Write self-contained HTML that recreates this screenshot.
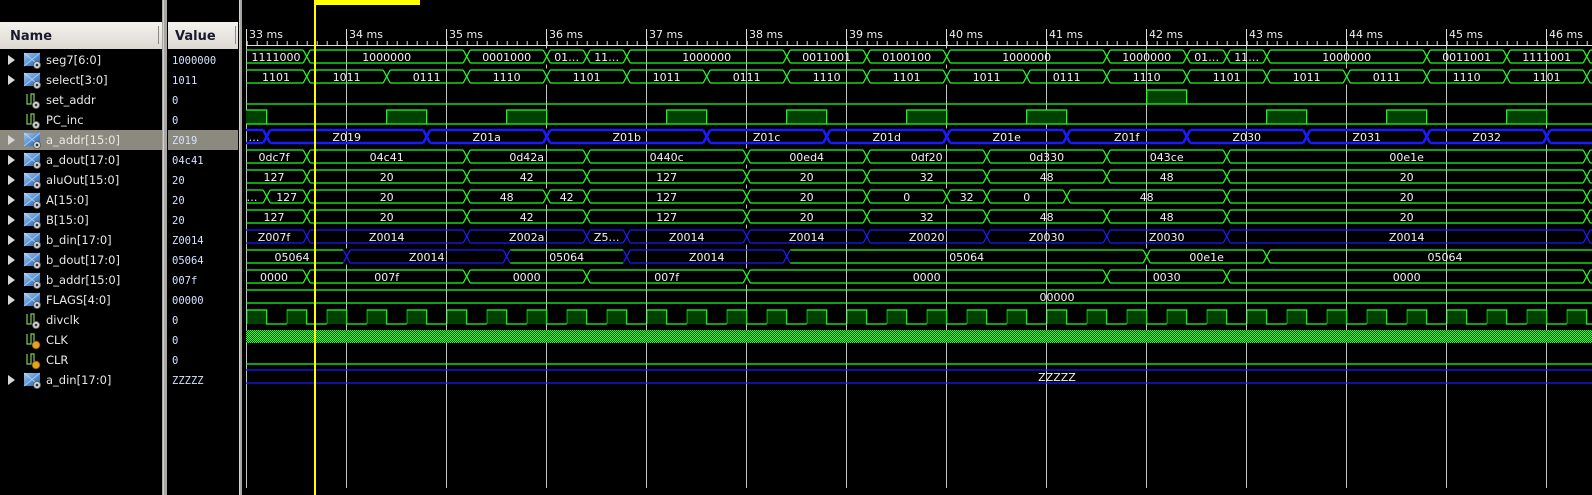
<!DOCTYPE html>
<html><head><meta charset="utf-8"><style>
html,body{margin:0;padding:0;background:#000;width:1592px;height:495px;overflow:hidden}
svg{display:block}
.n{font-family:"DejaVu Sans","Liberation Sans",sans-serif;font-size:11.5px;fill:#e8e8e8}
.v{font-family:"DejaVu Sans Mono","Liberation Mono",monospace;font-size:10.5px;fill:#d4e2ff}
.w{font-family:"DejaVu Sans","Liberation Sans",sans-serif;font-size:11px;fill:#f0f0f0;text-anchor:middle}
.r{font-family:"DejaVu Sans","Liberation Sans",sans-serif;font-size:11px;fill:#f0f0f0}
.h{font-family:"DejaVu Sans","Liberation Sans",sans-serif;font-size:13px;font-weight:bold;fill:#1a1a2e}
</style></head><body>
<svg width="1592" height="495" viewBox="0 0 1592 495" xmlns="http://www.w3.org/2000/svg">
<defs>
<linearGradient id="hg" x1="0" y1="0" x2="0" y2="1"><stop offset="0" stop-color="#f4f2ee"/><stop offset="1" stop-color="#dcd9d3"/></linearGradient>
<linearGradient id="bi" x1="0" y1="0" x2="1" y2="1"><stop offset="0" stop-color="#9cc8f0"/><stop offset="1" stop-color="#1e5fb0"/></linearGradient>
<pattern id="chk" width="2" height="2" patternUnits="userSpaceOnUse"><rect width="2" height="2" fill="#0a4a0a"/><rect width="1" height="1" fill="#33ff33"/><rect x="1" y="1" width="1" height="1" fill="#33ff33"/></pattern>
<pattern id="clkp" x="246.7" y="308" width="40" height="18" patternUnits="userSpaceOnUse"><rect x="0" y="2" width="20" height="14" fill="#004000"/><path d="M0 16 V2 H20 V16 H40" fill="none" stroke="#1eff1e" stroke-width="1.3"/></pattern>
<pattern id="tick" x="246.7" y="41" width="10" height="4" patternUnits="userSpaceOnUse"><rect x="0" y="0" width="1" height="4" fill="#e0e0e0"/></pattern>
<clipPath id="wc"><rect x="246" y="0" width="1346" height="495"/></clipPath>
<g id="gear"><circle r="3.6" fill="#cfcfcf" stroke="#555" stroke-width="0.8"/><circle r="1.3" fill="#333"/></g>
<g id="busi"><rect x="0" y="-7" width="16" height="13" fill="url(#bi)"/><path d="M0 -7 L16 6 M16 -7 L0 6" stroke="#d8ecff" stroke-width="1" opacity=".6"/><use href="#gear" x="13" y="5"/></g>
<g id="sigi"><path d="M1 -6 V4 H5 V-6 H8 V4" fill="none" stroke="#7ccf5a" stroke-width="1.2"/><use href="#gear" x="10" y="5"/></g>
<g id="clki"><path d="M1 -6 V4 H5 V-6 H8 V4" fill="none" stroke="#7ccf5a" stroke-width="1.2"/><circle cx="10" cy="5" r="3.8" fill="#e8a020" stroke="#8a5a00" stroke-width=".8"/></g>
<path id="tri" d="M0 -5 L7 0 L0 5 Z" fill="#d8d8d8"/>
<g id="x"><rect x="-3.5" y="-1.5" width="7" height="16" fill="#000" stroke="none"/><path d="M-3.5 0 L3.5 13 M-3.5 13 L3.5 0" fill="none"/></g>
</defs>
<rect width="1592" height="495" fill="#000"/>
<rect x="0" y="22" width="162" height="27" fill="url(#hg)"/>
<rect x="158" y="26" width="1" height="18" fill="#888"/>
<text class="h" x="10" y="40">Name</text>
<rect x="168" y="22" width="70" height="27" fill="url(#hg)"/>
<rect x="235" y="26" width="1" height="18" fill="#888"/>
<text class="h" x="175" y="40">Value</text>
<rect x="162" y="0" width="5" height="495" fill="#a8a6a0"/>
<rect x="163" y="0" width="1" height="495" fill="#d4d2cc"/>
<rect x="239" y="0" width="3" height="495" fill="#a8a6a0"/>
<rect x="239" y="0" width="1" height="495" fill="#d4d2cc"/>
<rect x="0" y="130" width="162" height="20" fill="#8c8a7e"/>
<rect x="168" y="130" width="70" height="20" fill="#8c8a7e"/>
<use href="#tri" x="8" y="60"/><use href="#busi" x="24" y="60"/>
<use href="#tri" x="8" y="80"/><use href="#busi" x="24" y="80"/>
<use href="#sigi" x="26" y="100"/>
<use href="#sigi" x="26" y="120"/>
<use href="#tri" x="8" y="140"/><use href="#busi" x="24" y="140"/>
<use href="#tri" x="8" y="160"/><use href="#busi" x="24" y="160"/>
<use href="#tri" x="8" y="180"/><use href="#busi" x="24" y="180"/>
<use href="#tri" x="8" y="200"/><use href="#busi" x="24" y="200"/>
<use href="#tri" x="8" y="220"/><use href="#busi" x="24" y="220"/>
<use href="#tri" x="8" y="240"/><use href="#busi" x="24" y="240"/>
<use href="#tri" x="8" y="260"/><use href="#busi" x="24" y="260"/>
<use href="#tri" x="8" y="280"/><use href="#busi" x="24" y="280"/>
<use href="#tri" x="8" y="300"/><use href="#busi" x="24" y="300"/>
<use href="#sigi" x="26" y="320"/>
<use href="#clki" x="26" y="340"/>
<use href="#clki" x="26" y="360"/>
<use href="#tri" x="8" y="380"/><use href="#busi" x="24" y="380"/>
<text class="n" x="46" y="64">seg7[6:0]</text>
<text class="n" x="46" y="84">select[3:0]</text>
<text class="n" x="46" y="104">set_addr</text>
<text class="n" x="46" y="124">PC_inc</text>
<text class="n" x="46" y="144">a_addr[15:0]</text>
<text class="n" x="46" y="164">a_dout[17:0]</text>
<text class="n" x="46" y="184">aluOut[15:0]</text>
<text class="n" x="46" y="204">A[15:0]</text>
<text class="n" x="46" y="224">B[15:0]</text>
<text class="n" x="46" y="244">b_din[17:0]</text>
<text class="n" x="46" y="264">b_dout[17:0]</text>
<text class="n" x="46" y="284">b_addr[15:0]</text>
<text class="n" x="46" y="304">FLAGS[4:0]</text>
<text class="n" x="46" y="324">divclk</text>
<text class="n" x="46" y="344">CLK</text>
<text class="n" x="46" y="364">CLR</text>
<text class="n" x="46" y="384">a_din[17:0]</text>
<text class="v" x="172" y="64">1000000</text>
<text class="v" x="172" y="84">1011</text>
<text class="v" x="172" y="104">0</text>
<text class="v" x="172" y="124">0</text>
<text class="v" x="172" y="144">Z019</text>
<text class="v" x="172" y="164">04c41</text>
<text class="v" x="172" y="184">20</text>
<text class="v" x="172" y="204">20</text>
<text class="v" x="172" y="224">20</text>
<text class="v" x="172" y="244">Z0014</text>
<text class="v" x="172" y="264">05064</text>
<text class="v" x="172" y="284">007f</text>
<text class="v" x="172" y="304">00000</text>
<text class="v" x="172" y="324">0</text>
<text class="v" x="172" y="344">0</text>
<text class="v" x="172" y="364">0</text>
<text class="v" x="172" y="384">ZZZZZ</text>
<rect x="246" y="45" width="1346" height="1" fill="#e0e0e0"/>
<rect x="246" y="41" width="1346" height="4" fill="url(#tick)"/>
<text class="r" x="249" y="38">33 ms</text><text class="r" x="349" y="38">34 ms</text><text class="r" x="449" y="38">35 ms</text><text class="r" x="549" y="38">36 ms</text><text class="r" x="649" y="38">37 ms</text><text class="r" x="749" y="38">38 ms</text><text class="r" x="849" y="38">39 ms</text><text class="r" x="949" y="38">40 ms</text><text class="r" x="1049" y="38">41 ms</text><text class="r" x="1149" y="38">42 ms</text><text class="r" x="1249" y="38">43 ms</text><text class="r" x="1349" y="38">44 ms</text><text class="r" x="1449" y="38">45 ms</text><text class="r" x="1549" y="38">46 ms</text>
<g fill="#e0e0e0">
<rect x="246" y="29" width="1" height="17"/><rect x="346" y="29" width="1" height="17"/><rect x="446" y="29" width="1" height="17"/><rect x="546" y="29" width="1" height="17"/><rect x="646" y="29" width="1" height="17"/><rect x="746" y="29" width="1" height="17"/><rect x="846" y="29" width="1" height="17"/><rect x="946" y="29" width="1" height="17"/><rect x="1046" y="29" width="1" height="17"/><rect x="1146" y="29" width="1" height="17"/><rect x="1246" y="29" width="1" height="17"/><rect x="1346" y="29" width="1" height="17"/><rect x="1446" y="29" width="1" height="17"/><rect x="1546" y="29" width="1" height="17"/>
</g>
<g fill="#c4c4c4">
<rect x="246" y="46" width="1" height="442"/><rect x="346" y="46" width="1" height="442"/><rect x="446" y="46" width="1" height="442"/><rect x="546" y="46" width="1" height="442"/><rect x="646" y="46" width="1" height="442"/><rect x="746" y="46" width="1" height="442"/><rect x="846" y="46" width="1" height="442"/><rect x="946" y="46" width="1" height="442"/><rect x="1046" y="46" width="1" height="442"/><rect x="1146" y="46" width="1" height="442"/><rect x="1246" y="46" width="1" height="442"/><rect x="1346" y="46" width="1" height="442"/><rect x="1446" y="46" width="1" height="442"/><rect x="1546" y="46" width="1" height="442"/>
</g>
<g clip-path="url(#wc)">
<g stroke="#1eff1e" stroke-width="1.3" fill="none">
<path d="M240 50 H1600 M240 63 H1600"/>
<use href="#x" x="306.7" y="50"/><use href="#x" x="466.7" y="50"/><use href="#x" x="546.7" y="50"/><use href="#x" x="586.7" y="50"/><use href="#x" x="626.7" y="50"/><use href="#x" x="786.7" y="50"/><use href="#x" x="866.7" y="50"/><use href="#x" x="946.7" y="50"/><use href="#x" x="1106.7" y="50"/><use href="#x" x="1186.7" y="50"/><use href="#x" x="1226.7" y="50"/><use href="#x" x="1266.7" y="50"/><use href="#x" x="1426.7" y="50"/><use href="#x" x="1506.7" y="50"/><use href="#x" x="1586.7" y="50"/>
<path d="M240 70 H1600 M240 83 H1600"/>
<use href="#x" x="306.7" y="70"/><use href="#x" x="386.7" y="70"/><use href="#x" x="466.7" y="70"/><use href="#x" x="546.7" y="70"/><use href="#x" x="626.7" y="70"/><use href="#x" x="706.7" y="70"/><use href="#x" x="786.7" y="70"/><use href="#x" x="866.7" y="70"/><use href="#x" x="946.7" y="70"/><use href="#x" x="1026.7" y="70"/><use href="#x" x="1106.7" y="70"/><use href="#x" x="1186.7" y="70"/><use href="#x" x="1266.7" y="70"/><use href="#x" x="1346.7" y="70"/><use href="#x" x="1426.7" y="70"/><use href="#x" x="1506.7" y="70"/><use href="#x" x="1586.7" y="70"/>
<path d="M240 104 H1146.7 V90 H1186.7 V104 H1600 Z" fill="#004000"/>
<path d="M240 124 V110 H266.7 V124 H386.7 V110 H426.7 V124 H506.7 V110 H546.7 V124 H666.7 V110 H706.7 V124 H786.7 V110 H826.7 V124 H906.7 V110 H946.7 V124 H1026.7 V110 H1066.7 V124 H1266.7 V110 H1306.7 V124 H1386.7 V110 H1426.7 V124 H1506.7 V110 H1546.7 V124 H1600 Z" fill="#004000"/>
<path d="M240 150 H1600 M240 163 H1600 M240 170 H1600 M240 183 H1600 M240 210 H1600 M240 223 H1600 M240 190 H1600 M240 203 H1600"/>
<use href="#x" x="306.7" y="150"/><use href="#x" x="466.7" y="150"/><use href="#x" x="586.7" y="150"/><use href="#x" x="746.7" y="150"/><use href="#x" x="866.7" y="150"/><use href="#x" x="986.7" y="150"/><use href="#x" x="1106.7" y="150"/><use href="#x" x="1226.7" y="150"/><use href="#x" x="1586.7" y="150"/>
<use href="#x" x="306.7" y="170"/><use href="#x" x="466.7" y="170"/><use href="#x" x="586.7" y="170"/><use href="#x" x="746.7" y="170"/><use href="#x" x="866.7" y="170"/><use href="#x" x="986.7" y="170"/><use href="#x" x="1106.7" y="170"/><use href="#x" x="1226.7" y="170"/><use href="#x" x="1586.7" y="170"/>
<use href="#x" x="306.7" y="210"/><use href="#x" x="466.7" y="210"/><use href="#x" x="586.7" y="210"/><use href="#x" x="746.7" y="210"/><use href="#x" x="866.7" y="210"/><use href="#x" x="986.7" y="210"/><use href="#x" x="1106.7" y="210"/><use href="#x" x="1226.7" y="210"/><use href="#x" x="1586.7" y="210"/>
<use href="#x" x="266.7" y="190"/><use href="#x" x="306.7" y="190"/><use href="#x" x="466.7" y="190"/><use href="#x" x="546.7" y="190"/><use href="#x" x="586.7" y="190"/><use href="#x" x="746.7" y="190"/><use href="#x" x="866.7" y="190"/><use href="#x" x="946.7" y="190"/><use href="#x" x="986.7" y="190"/><use href="#x" x="1066.7" y="190"/><use href="#x" x="1226.7" y="190"/><use href="#x" x="1586.7" y="190"/>
<path d="M240 270 H1600 M240 283 H1600"/>
<use href="#x" x="306.7" y="270"/><use href="#x" x="466.7" y="270"/><use href="#x" x="586.7" y="270"/><use href="#x" x="746.7" y="270"/><use href="#x" x="1106.7" y="270"/><use href="#x" x="1226.7" y="270"/><use href="#x" x="1586.7" y="270"/>
<path d="M240 290 H1600 M240 303 H1600"/>
<path d="M240 364 H1600"/>
<path d="M240 250 H346.7 M240 263 H346.7 M506.7 250 H626.7 M506.7 263 H626.7 M786.7 250 H1600 M786.7 263 H1600"/>
<use href="#x" x="1146.7" y="250"/><use href="#x" x="1266.7" y="250"/>
</g>
<g stroke="#1a1aff" stroke-width="2.6" fill="none">
<path d="M240 130 H1600 M240 143 H1600"/>
<use href="#x" x="266.7" y="130"/><use href="#x" x="426.7" y="130"/><use href="#x" x="546.7" y="130"/><use href="#x" x="706.7" y="130"/><use href="#x" x="826.7" y="130"/><use href="#x" x="946.7" y="130"/><use href="#x" x="1066.7" y="130"/><use href="#x" x="1186.7" y="130"/><use href="#x" x="1306.7" y="130"/><use href="#x" x="1426.7" y="130"/><use href="#x" x="1546.7" y="130"/>
</g>
<g stroke="#1a1aff" stroke-width="1.3" fill="none">
<path d="M240 230 H1600 M240 243 H1600"/>
<use href="#x" x="306.7" y="230"/><use href="#x" x="466.7" y="230"/><use href="#x" x="586.7" y="230"/><use href="#x" x="626.7" y="230"/><use href="#x" x="746.7" y="230"/><use href="#x" x="866.7" y="230"/><use href="#x" x="986.7" y="230"/><use href="#x" x="1106.7" y="230"/><use href="#x" x="1226.7" y="230"/><use href="#x" x="1586.7" y="230"/>
<path d="M346.7 250 H506.7 M346.7 263 H506.7 M626.7 250 H786.7 M626.7 263 H786.7"/>
<use href="#x" x="346.7" y="250"/><use href="#x" x="506.7" y="250"/><use href="#x" x="626.7" y="250"/><use href="#x" x="786.7" y="250"/>
<path d="M240 370 H1600 M240 383 H1600"/>
</g>
<rect x="246" y="308" width="1346" height="18" fill="url(#clkp)"/>
<rect x="246" y="330" width="1346" height="13" fill="url(#chk)"/>
<text class="w" x="276" y="61">1111000</text><text class="w" x="386.7" y="61">1000000</text><text class="w" x="506.7" y="61">0001000</text><text class="w" x="566.7" y="61">01…</text><text class="w" x="606.7" y="61">11…</text><text class="w" x="706.7" y="61">1000000</text><text class="w" x="826.7" y="61">0011001</text><text class="w" x="906.7" y="61">0100100</text><text class="w" x="1026.7" y="61">1000000</text><text class="w" x="1146.7" y="61">1000000</text><text class="w" x="1206.7" y="61">01…</text><text class="w" x="1246.7" y="61">11…</text><text class="w" x="1346.7" y="61">1000000</text><text class="w" x="1466.7" y="61">0011001</text><text class="w" x="1546.7" y="61">1111001</text>
<text class="w" x="276" y="81">1101</text><text class="w" x="346.7" y="81">1011</text><text class="w" x="426.7" y="81">0111</text><text class="w" x="506.7" y="81">1110</text><text class="w" x="586.7" y="81">1101</text><text class="w" x="666.7" y="81">1011</text><text class="w" x="746.7" y="81">0111</text><text class="w" x="826.7" y="81">1110</text><text class="w" x="906.7" y="81">1101</text><text class="w" x="986.7" y="81">1011</text><text class="w" x="1066.7" y="81">0111</text><text class="w" x="1146.7" y="81">1110</text><text class="w" x="1226.7" y="81">1101</text><text class="w" x="1306.7" y="81">1011</text><text class="w" x="1386.7" y="81">0111</text><text class="w" x="1466.7" y="81">1110</text><text class="w" x="1546.7" y="81">1101</text>
<text class="w" x="254" y="141">…</text><text class="w" x="346.7" y="141">Z019</text><text class="w" x="486.7" y="141">Z01a</text><text class="w" x="626.7" y="141">Z01b</text><text class="w" x="766.7" y="141">Z01c</text><text class="w" x="886.7" y="141">Z01d</text><text class="w" x="1006.7" y="141">Z01e</text><text class="w" x="1126.7" y="141">Z01f</text><text class="w" x="1246.7" y="141">Z030</text><text class="w" x="1366.7" y="141">Z031</text><text class="w" x="1486.7" y="141">Z032</text>
<text class="w" x="274" y="161">0dc7f</text><text class="w" x="386.7" y="161">04c41</text><text class="w" x="526.7" y="161">0d42a</text><text class="w" x="666.7" y="161">0440c</text><text class="w" x="806.7" y="161">00ed4</text><text class="w" x="926.7" y="161">0df20</text><text class="w" x="1046.7" y="161">0d330</text><text class="w" x="1166.7" y="161">043ce</text><text class="w" x="1406.7" y="161">00e1e</text>
<text class="w" x="274" y="181">127</text><text class="w" x="386.7" y="181">20</text><text class="w" x="526.7" y="181">42</text><text class="w" x="666.7" y="181">127</text><text class="w" x="806.7" y="181">20</text><text class="w" x="926.7" y="181">32</text><text class="w" x="1046.7" y="181">48</text><text class="w" x="1166.7" y="181">48</text><text class="w" x="1406.7" y="181">20</text>
<text class="w" x="252" y="201">…</text><text class="w" x="286.7" y="201">127</text><text class="w" x="386.7" y="201">20</text><text class="w" x="506.7" y="201">48</text><text class="w" x="566.7" y="201">42</text><text class="w" x="666.7" y="201">127</text><text class="w" x="806.7" y="201">20</text><text class="w" x="906.7" y="201">0</text><text class="w" x="966.7" y="201">32</text><text class="w" x="1026.7" y="201">0</text><text class="w" x="1146.7" y="201">48</text><text class="w" x="1406.7" y="201">20</text>
<text class="w" x="274" y="221">127</text><text class="w" x="386.7" y="221">20</text><text class="w" x="526.7" y="221">42</text><text class="w" x="666.7" y="221">127</text><text class="w" x="806.7" y="221">20</text><text class="w" x="926.7" y="221">32</text><text class="w" x="1046.7" y="221">48</text><text class="w" x="1166.7" y="221">48</text><text class="w" x="1406.7" y="221">20</text>
<text class="w" x="274" y="241">Z007f</text><text class="w" x="386.7" y="241">Z0014</text><text class="w" x="526.7" y="241">Z002a</text><text class="w" x="606.7" y="241">Z5…</text><text class="w" x="686.7" y="241">Z0014</text><text class="w" x="806.7" y="241">Z0014</text><text class="w" x="926.7" y="241">Z0020</text><text class="w" x="1046.7" y="241">Z0030</text><text class="w" x="1166.7" y="241">Z0030</text><text class="w" x="1406.7" y="241">Z0014</text>
<text class="w" x="292" y="261">05064</text><text class="w" x="426.7" y="261">Z0014</text><text class="w" x="566.7" y="261">05064</text><text class="w" x="706.7" y="261">Z0014</text><text class="w" x="966.7" y="261">05064</text><text class="w" x="1206.7" y="261">00e1e</text><text class="w" x="1445" y="261">05064</text>
<text class="w" x="274" y="281">0000</text><text class="w" x="386.7" y="281">007f</text><text class="w" x="526.7" y="281">0000</text><text class="w" x="666.7" y="281">007f</text><text class="w" x="926.7" y="281">0000</text><text class="w" x="1166.7" y="281">0030</text><text class="w" x="1406.7" y="281">0000</text>
<text class="w" x="1057" y="301">00000</text>
<text class="w" x="1057" y="381">ZZZZZ</text>
</g>
<rect x="314" y="0" width="2" height="495" fill="#ffff00"/>
<rect x="315" y="0" width="105" height="5" fill="#ffff00"/>
</svg>
</body></html>
